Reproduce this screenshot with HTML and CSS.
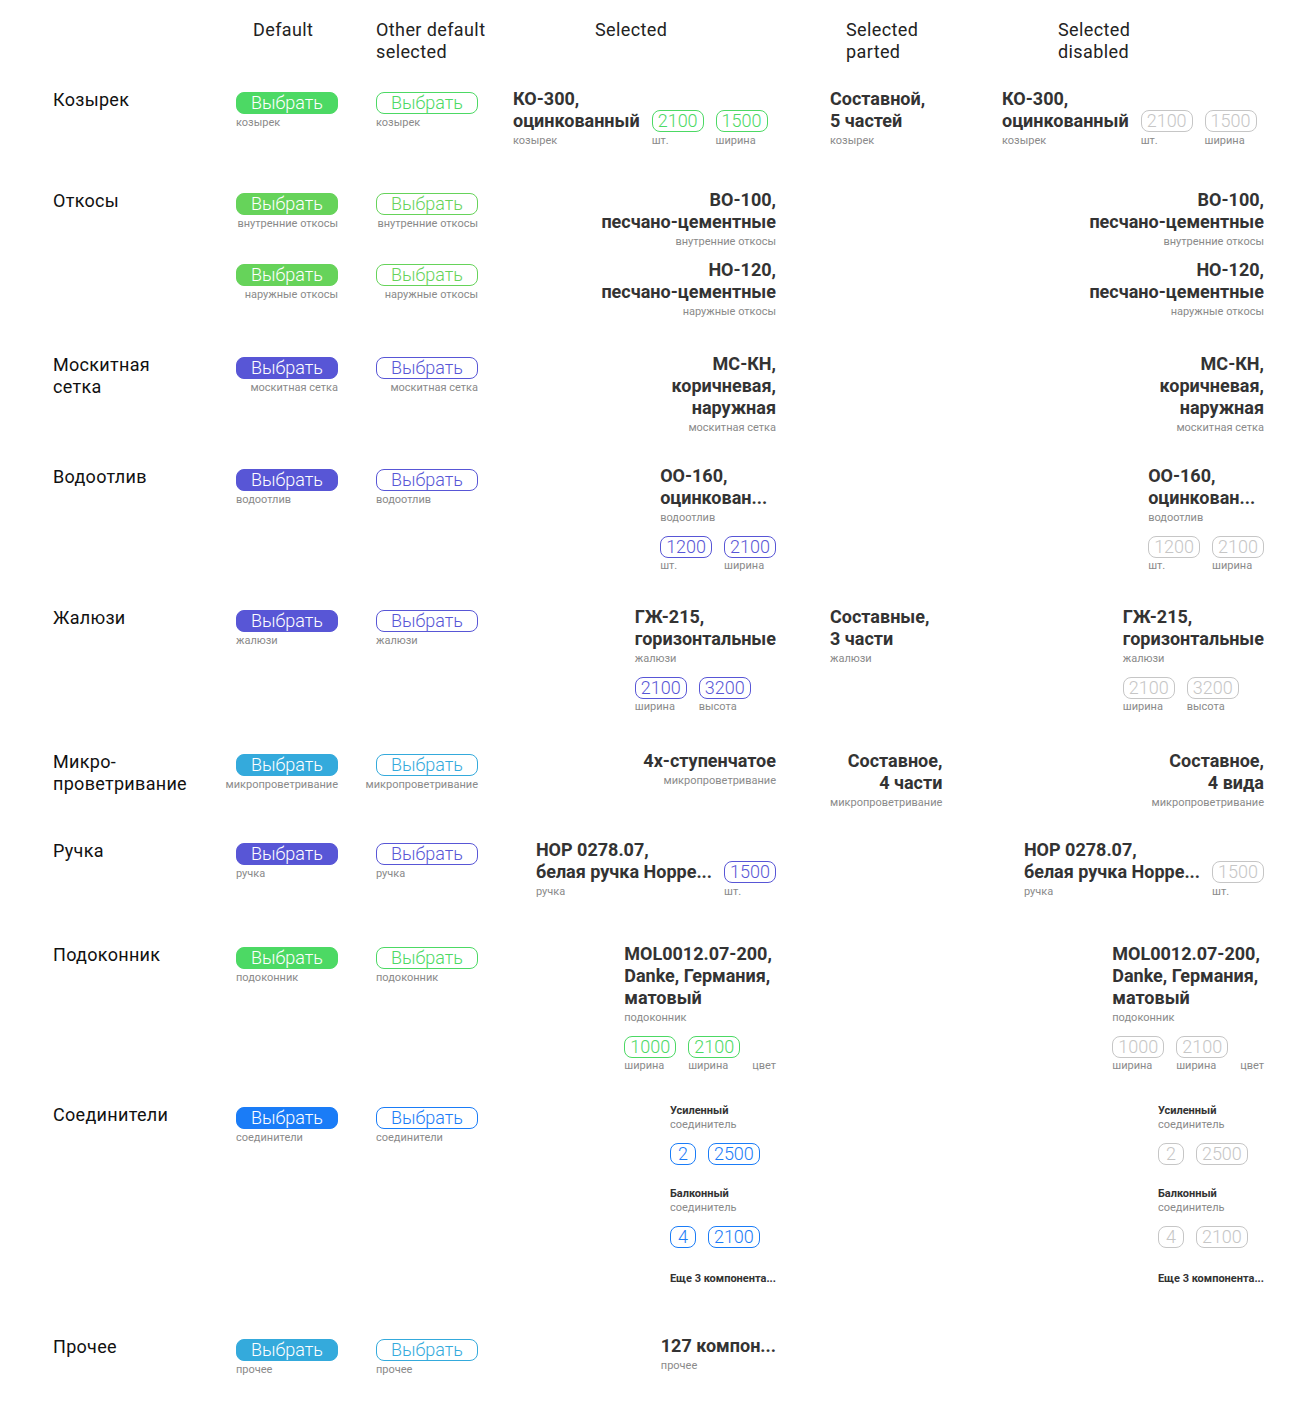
FILE: index.html
```html
<!DOCTYPE html>
<html lang="ru">
<head>
<meta charset="utf-8">
<title>Компоненты</title>
<link rel="stylesheet" href="styles.css">
</head>
<body>
<div class="matrix">
  <!-- header -->
  <div class="head"></div>
  <div class="head head-default">Default</div>
  <div class="head">Other default<br>selected</div>
  <div class="head head-selected">Selected</div>
  <div class="head head-parted">Selected<br>parted</div>
  <div class="head head-disabled">Selected<br>disabled</div>

  <!-- Козырек -->
  <div class="label">Козырек</div>
  <div class="choose green"><div class="opt"><div class="btn">Выбрать</div><div class="cap">козырек</div></div></div>
  <div class="choose green"><div class="opt"><div class="btn outline">Выбрать</div><div class="cap">козырек</div></div></div>
  <div class="sel start">
    <div class="item-inline green">
      <div class="tcol"><div class="title">КО-300,<br>оцинкованный</div><div class="cap">козырек</div></div>
      <div class="pcol"><span class="pill">2100</span><div class="cap">шт.</div></div>
      <div class="pcol"><span class="pill">1500</span><div class="cap">ширина</div></div>
    </div>
  </div>
  <div class="part">
    <div class="item"><div class="title">Составной,<br>5 частей</div><div class="cap">козырек</div></div>
  </div>
  <div class="dis start">
    <div class="item-inline gray">
      <div class="tcol"><div class="title">КО-300,<br>оцинкованный</div><div class="cap">козырек</div></div>
      <div class="pcol"><span class="pill">2100</span><div class="cap">шт.</div></div>
      <div class="pcol"><span class="pill">1500</span><div class="cap">ширина</div></div>
    </div>
  </div>

  <!-- Откосы -->
  <div class="label">Откосы</div>
  <div class="choose lime">
    <div class="opt"><div class="btn">Выбрать</div><div class="cap-end"><span class="cap">внутренние откосы</span></div></div>
    <div class="opt"><div class="btn">Выбрать</div><div class="cap-end"><span class="cap">наружные откосы</span></div></div>
  </div>
  <div class="choose lime">
    <div class="opt"><div class="btn outline">Выбрать</div><div class="cap-end"><span class="cap">внутренние откосы</span></div></div>
    <div class="opt"><div class="btn outline">Выбрать</div><div class="cap-end"><span class="cap">наружные откосы</span></div></div>
  </div>
  <div class="sel">
    <div class="stack">
      <div class="item right"><div class="title">ВО-100,<br>песчано-цементные</div><div class="cap">внутренние откосы</div></div>
      <div class="item right"><div class="title">НО-120,<br>песчано-цементные</div><div class="cap">наружные откосы</div></div>
    </div>
  </div>
  <div class="part"></div>
  <div class="dis">
    <div class="stack">
      <div class="item right"><div class="title">ВО-100,<br>песчано-цементные</div><div class="cap">внутренние откосы</div></div>
      <div class="item right"><div class="title">НО-120,<br>песчано-цементные</div><div class="cap">наружные откосы</div></div>
    </div>
  </div>

  <!-- Москитная сетка -->
  <div class="label">Москитная<br>сетка</div>
  <div class="choose purple"><div class="opt"><div class="btn">Выбрать</div><div class="cap-end"><span class="cap">москитная сетка</span></div></div></div>
  <div class="choose purple"><div class="opt"><div class="btn outline">Выбрать</div><div class="cap-end"><span class="cap">москитная сетка</span></div></div></div>
  <div class="sel">
    <div class="item right"><div class="title">МС-КН,<br>коричневая,<br>наружная</div><div class="cap">москитная сетка</div></div>
  </div>
  <div class="part"></div>
  <div class="dis">
    <div class="item right"><div class="title">МС-КН,<br>коричневая,<br>наружная</div><div class="cap">москитная сетка</div></div>
  </div>

  <!-- Водоотлив -->
  <div class="label">Водоотлив</div>
  <div class="choose purple"><div class="opt"><div class="btn">Выбрать</div><div class="cap">водоотлив</div></div></div>
  <div class="choose purple"><div class="opt"><div class="btn outline">Выбрать</div><div class="cap">водоотлив</div></div></div>
  <div class="sel">
    <div class="item purple">
      <div class="title">ОО-160,<br>оцинкован...</div><div class="cap">водоотлив</div>
      <div class="pills">
        <div class="pcol"><span class="pill">1200</span><div class="cap">шт.</div></div>
        <div class="pcol"><span class="pill">2100</span><div class="cap">ширина</div></div>
      </div>
    </div>
  </div>
  <div class="part"></div>
  <div class="dis">
    <div class="item gray">
      <div class="title">ОО-160,<br>оцинкован...</div><div class="cap">водоотлив</div>
      <div class="pills">
        <div class="pcol"><span class="pill">1200</span><div class="cap">шт.</div></div>
        <div class="pcol"><span class="pill">2100</span><div class="cap">ширина</div></div>
      </div>
    </div>
  </div>

  <!-- Жалюзи -->
  <div class="label">Жалюзи</div>
  <div class="choose purple"><div class="opt"><div class="btn">Выбрать</div><div class="cap">жалюзи</div></div></div>
  <div class="choose purple"><div class="opt"><div class="btn outline">Выбрать</div><div class="cap">жалюзи</div></div></div>
  <div class="sel">
    <div class="item purple">
      <div class="title">ГЖ-215,<br>горизонтальные</div><div class="cap">жалюзи</div>
      <div class="pills">
        <div class="pcol"><span class="pill">2100</span><div class="cap">ширина</div></div>
        <div class="pcol"><span class="pill">3200</span><div class="cap">высота</div></div>
      </div>
    </div>
  </div>
  <div class="part">
    <div class="item"><div class="title">Составные,<br>3 части</div><div class="cap">жалюзи</div></div>
  </div>
  <div class="dis">
    <div class="item gray">
      <div class="title">ГЖ-215,<br>горизонтальные</div><div class="cap">жалюзи</div>
      <div class="pills">
        <div class="pcol"><span class="pill">2100</span><div class="cap">ширина</div></div>
        <div class="pcol"><span class="pill">3200</span><div class="cap">высота</div></div>
      </div>
    </div>
  </div>

  <!-- Микропроветривание -->
  <div class="label">Микро-<br>проветривание</div>
  <div class="choose sky"><div class="opt"><div class="btn">Выбрать</div><div class="cap-end"><span class="cap">микропроветривание</span></div></div></div>
  <div class="choose sky"><div class="opt"><div class="btn outline">Выбрать</div><div class="cap-end"><span class="cap">микропроветривание</span></div></div></div>
  <div class="sel">
    <div class="item right"><div class="title">4х-ступенчатое</div><div class="cap">микропроветривание</div></div>
  </div>
  <div class="part">
    <div class="item right"><div class="title">Составное,<br>4 части</div><div class="cap">микропроветривание</div></div>
  </div>
  <div class="dis">
    <div class="item right"><div class="title">Составное,<br>4 вида</div><div class="cap">микропроветривание</div></div>
  </div>

  <!-- Ручка -->
  <div class="label">Ручка</div>
  <div class="choose purple"><div class="opt"><div class="btn">Выбрать</div><div class="cap">ручка</div></div></div>
  <div class="choose purple"><div class="opt"><div class="btn outline">Выбрать</div><div class="cap">ручка</div></div></div>
  <div class="sel">
    <div class="item-inline purple">
      <div class="tcol"><div class="title">HOP 0278.07,<br>белая ручка Hoppe...</div><div class="cap">ручка</div></div>
      <div class="pcol"><span class="pill">1500</span><div class="cap">шт.</div></div>
    </div>
  </div>
  <div class="part"></div>
  <div class="dis">
    <div class="item-inline gray">
      <div class="tcol"><div class="title">HOP 0278.07,<br>белая ручка Hoppe...</div><div class="cap">ручка</div></div>
      <div class="pcol"><span class="pill">1500</span><div class="cap">шт.</div></div>
    </div>
  </div>

  <!-- Подоконник -->
  <div class="label">Подоконник</div>
  <div class="choose green"><div class="opt"><div class="btn">Выбрать</div><div class="cap">подоконник</div></div></div>
  <div class="choose green"><div class="opt"><div class="btn outline">Выбрать</div><div class="cap">подоконник</div></div></div>
  <div class="sel">
    <div class="item green">
      <div class="title">MOL0012.07-200,<br>Danke, Германия,<br>матовый</div><div class="cap">подоконник</div>
      <div class="pills">
        <div class="pcol"><span class="pill">1000</span><div class="cap">ширина</div></div>
        <div class="pcol"><span class="pill">2100</span><div class="cap">ширина</div></div>
        <div class="pcol"><span class="pill-blank"></span><div class="cap">цвет</div></div>
      </div>
    </div>
  </div>
  <div class="part"></div>
  <div class="dis">
    <div class="item gray">
      <div class="title">MOL0012.07-200,<br>Danke, Германия,<br>матовый</div><div class="cap">подоконник</div>
      <div class="pills">
        <div class="pcol"><span class="pill">1000</span><div class="cap">ширина</div></div>
        <div class="pcol"><span class="pill">2100</span><div class="cap">ширина</div></div>
        <div class="pcol"><span class="pill-blank"></span><div class="cap">цвет</div></div>
      </div>
    </div>
  </div>

  <!-- Соединители -->
  <div class="label">Соединители</div>
  <div class="choose blue"><div class="opt"><div class="btn">Выбрать</div><div class="cap">соединители</div></div></div>
  <div class="choose blue"><div class="opt"><div class="btn outline">Выбрать</div><div class="cap">соединители</div></div></div>
  <div class="sel">
    <div class="item conn blue">
      <div class="sub">Усиленный</div><div class="cap">соединитель</div>
      <div class="pills"><span class="pill">2</span><span class="pill">2500</span></div>
      <div class="sub next">Балконный</div><div class="cap">соединитель</div>
      <div class="pills"><span class="pill">4</span><span class="pill">2100</span></div>
      <div class="sub more">Еще 3 компонента...</div>
    </div>
  </div>
  <div class="part"></div>
  <div class="dis">
    <div class="item conn gray">
      <div class="sub">Усиленный</div><div class="cap">соединитель</div>
      <div class="pills"><span class="pill">2</span><span class="pill">2500</span></div>
      <div class="sub next">Балконный</div><div class="cap">соединитель</div>
      <div class="pills"><span class="pill">4</span><span class="pill">2100</span></div>
      <div class="sub more">Еще 3 компонента...</div>
    </div>
  </div>

  <!-- Прочее -->
  <div class="label">Прочее</div>
  <div class="choose sky"><div class="opt"><div class="btn">Выбрать</div><div class="cap">прочее</div></div></div>
  <div class="choose sky"><div class="opt"><div class="btn outline">Выбрать</div><div class="cap">прочее</div></div></div>
  <div class="sel">
    <div class="item"><div class="title">127 компон...</div><div class="cap">прочее</div></div>
  </div>
  <div class="part"></div>
  <div class="dis"></div>
</div>
</body>
</html>
```

FILE: styles.css
```css
* {
  box-sizing: border-box;
}

body {
  margin: 0;
  background: #ffffff;
  font-family: Roboto, "Noto Sans", "Liberation Sans", sans-serif;
  color: #111111;
}

.green  { --c: #4cd964; }
.lime   { --c: #66d35a; }
.purple { --c: #5856d6; }
.sky    { --c: #34aadc; }
.blue   { --c: #1a7cf7; }
.gray   { --c: #c6c6c6; }

.matrix {
  display: grid;
  grid-template-columns: 183px 140px 137px 317px 172px 262px;
  grid-template-rows: 69px 101px 164px 112px 141px 144px 89px 104px 160px 232px auto;
  align-items: start;
  padding: 19px 0 30px 53px;
}

.head {
  font-size: 18px;
  line-height: 22px;
  letter-spacing: 0.4px;
  color: #222222;
}

.head-default  { padding-left: 17px; }
.head-selected { padding-left: 82px; }
.head-parted   { padding-left: 16px; }
.head-disabled { padding-left: 56px; }

.label {
  font-size: 18px;
  line-height: 22px;
  letter-spacing: 0.3px;
  color: #111111;
  padding-top: 1px;
}

/* buttons column */
.choose {
  display: flex;
  flex-direction: column;
  gap: 33px;
  padding-top: 4px;
}

.opt {
  width: 102px;
  display: flex;
  flex-direction: column;
  align-items: flex-start;
}

.btn {
  width: 102px;
  height: 22px;
  border: 1px solid var(--c);
  border-radius: 8px;
  background: var(--c);
  color: #ffffff;
  font-size: 18px;
  font-weight: 300;
  line-height: 20px;
  text-align: center;
}

.btn.outline {
  background: transparent;
  color: var(--c);
}

.cap {
  display: block;
  font-size: 11px;
  line-height: 14px;
  color: #8a8a8a;
  white-space: nowrap;
  margin-top: 2px;
}

.cap-end {
  width: 102px;
  display: flex;
  justify-content: flex-end;
}

/* selected columns */
.sel {
  display: flex;
  justify-content: flex-end;
  padding-right: 54px;
}

.dis {
  display: flex;
  justify-content: flex-end;
}

.sel.start,
.dis.start {
  justify-content: flex-start;
}

.part {
  display: flex;
  justify-content: flex-start;
}

.stack {
  display: flex;
  flex-direction: column;
  align-items: flex-end;
  gap: 10px;
}

.item {
  display: flex;
  flex-direction: column;
  align-items: flex-start;
}

.item.right {
  align-items: flex-end;
  text-align: right;
}

.title {
  font-size: 18px;
  line-height: 22px;
  font-weight: 700;
  color: #333333;
  white-space: nowrap;
}

.item-inline {
  display: flex;
  align-items: flex-end;
  gap: 12px;
}

.tcol {
  display: flex;
  flex-direction: column;
}

.tcol .cap {
  margin-top: 2px;
}

.pills {
  display: flex;
  gap: 12px;
  margin-top: 11px;
}

.pcol {
  display: flex;
  flex-direction: column;
  align-items: flex-start;
}

.pcol .cap {
  margin-top: 1px;
}

.item-inline .pcol .cap {
  margin-top: 2px;
}

.pill {
  display: inline-block;
  height: 22px;
  min-width: 26px;
  padding: 0 5px;
  border: 1px solid var(--c);
  border-radius: 8px;
  color: var(--c);
  font-size: 18px;
  font-weight: 300;
  line-height: 20px;
  text-align: center;
}

.pill-blank {
  display: block;
  height: 22px;
}

/* connectors */
.conn .sub {
  font-size: 11px;
  line-height: 14px;
  font-weight: 700;
  color: #333333;
  white-space: nowrap;
  padding-top: 1px;
}

.conn .cap {
  margin-top: 0;
}

.conn .sub.next {
  margin-top: 21px;
}

.conn .sub.more {
  margin-top: 23px;
}
```
